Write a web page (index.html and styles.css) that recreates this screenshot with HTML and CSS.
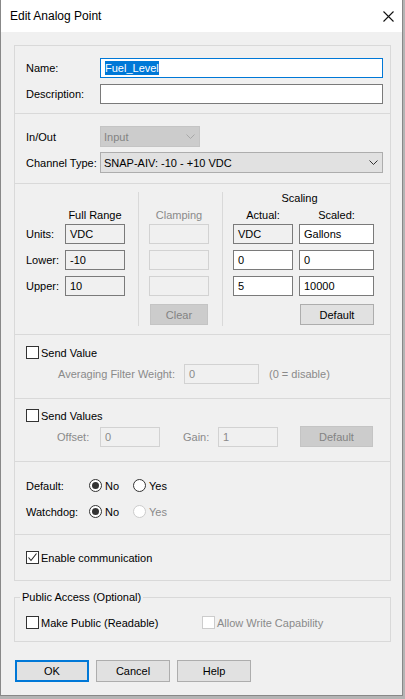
FILE: index.html
```html
<!DOCTYPE html>
<html>
<head>
<meta charset="utf-8">
<title>Edit Analog Point</title>
<link rel="stylesheet" href="styles.css">
</head>
<body>
<div class="window">
  <div class="titlebar">
    <span class="title">Edit Analog Point</span>
    <svg class="close" width="11" height="11" viewBox="0 0 11 11"><path d="M0.5 0.5L10.5 10.5M10.5 0.5L0.5 10.5" stroke="#111" stroke-width="1.1" fill="none"/></svg>
  </div>
  <div class="content">
    <div class="frame">
      <section class="sec sec-name">
        <div class="row"><span class="lbl">Name:</span><div class="field w-full focus"><span class="selected">Fuel_Level</span></div></div>
        <div class="row"><span class="lbl">Description:</span><div class="field w-full"></div></div>
      </section>

      <section class="sec sec-io">
        <div class="row"><span class="lbl">In/Out</span>
          <div class="combo dis w-io"><span class="txt">Input</span><span class="arrow"><svg width="9" height="5" viewBox="0 0 9 5"><path d="M0.5 0.5L4.5 4.5L8.5 0.5" stroke="#a8a8a8" fill="none"/></svg></span></div>
        </div>
        <div class="row"><span class="lbl">Channel Type:</span>
          <div class="combo w-full"><span class="txt">SNAP-AIV: -10 - +10 VDC</span><span class="arrow"><svg width="9" height="5" viewBox="0 0 9 5"><path d="M0.5 0.5L4.5 4.5L8.5 0.5" stroke="#333" fill="none"/></svg></span></div>
        </div>
      </section>

      <section class="sec sec-scale">
        <div class="scale-grid">
          <div class="hd hd-scaling">Scaling</div>
          <div class="hd c-fr r2">Full Range</div>
          <div class="hd c-cl r2 gray">Clamping</div>
          <div class="hd c-ac r2">Actual:</div>
          <div class="hd c-sc r2">Scaled:</div>
          <div class="vline v1"></div>
          <div class="vline v2"></div>

          <div class="slbl c-lb r3">Units:</div>
          <div class="field ro c-fr r3">VDC</div>
          <div class="field dis c-cl r3"></div>
          <div class="field ro c-ac r3">VDC</div>
          <div class="field c-sc r3">Gallons</div>

          <div class="slbl c-lb r4">Lower:</div>
          <div class="field ro c-fr r4">-10</div>
          <div class="field dis c-cl r4"></div>
          <div class="field c-ac r4">0</div>
          <div class="field c-sc r4">0</div>

          <div class="slbl c-lb r5">Upper:</div>
          <div class="field ro c-fr r5">10</div>
          <div class="field dis c-cl r5"></div>
          <div class="field c-ac r5">5</div>
          <div class="field c-sc r5">10000</div>

          <div class="btn dis btn-clear c-cl r6">Clear</div>
          <div class="btn btn-sdef c-sc r6">Default</div>
        </div>
      </section>

      <section class="sec sec-sv">
        <div class="chkrow"><span class="chk"></span><span>Send Value</span></div>
        <div class="row avg-row">
          <span class="avg-lbl gray">Averaging Filter Weight:</span>
          <div class="field dis w75">0</div>
          <span class="gray note">(0 = disable)</span>
        </div>
      </section>

      <section class="sec sec-svs">
        <div class="chkrow"><span class="chk"></span><span>Send Values</span></div>
        <div class="row off-row">
          <span class="off-lbl gray">Offset:</span>
          <div class="field dis w60">0</div>
          <span class="gain-lbl gray">Gain:</span>
          <div class="field dis w60">1</div>
          <div class="btn dis btn-vdef">Default</div>
        </div>
      </section>

      <section class="sec sec-radio">
        <div class="rrow"><span class="rlbl">Default:</span>
          <span class="opt"><span class="radio on"></span><span>No</span></span>
          <span class="opt"><span class="radio"></span><span>Yes</span></span>
        </div>
        <div class="rrow"><span class="rlbl">Watchdog:</span>
          <span class="opt"><span class="radio on"></span><span>No</span></span>
          <span class="opt gray"><span class="radio dis"></span><span>Yes</span></span>
        </div>
      </section>

      <section class="sec sec-comm">
        <div class="chkrow"><span class="chk"><svg width="11" height="11" viewBox="0 0 11 11"><path d="M1.5 5.5L4 8.5L9.5 1.5" stroke="#222" stroke-width="1.1" fill="none"/></svg></span><span>Enable communication</span></div>
      </section>
    </div>

    <fieldset class="group">
      <legend>Public Access (Optional)</legend>
      <div class="pubrow">
        <div class="chkrow pub1"><span class="chk"></span><span>Make Public (Readable)</span></div>
        <div class="chkrow gray"><span class="chk dis"></span><span>Allow Write Capability</span></div>
      </div>
    </fieldset>

    <div class="buttons">
      <div class="btn bbtn default">OK</div>
      <div class="btn bbtn">Cancel</div>
      <div class="btn bbtn">Help</div>
    </div>
  </div>
</div>
</body>
</html>
```

FILE: styles.css
```css
* { box-sizing: border-box; }
html, body { margin: 0; padding: 0; }
body {
  width: 405px;
  height: 699px;
  overflow: hidden;
  background: #b4b4b4;
  font-family: "Liberation Sans", Arial, sans-serif;
  font-size: 11px;
  color: #000;
}
.window {
  width: 403px;
  height: 696px;
  background: #f0f0f0;
  border: 1px solid #888;
  border-top: 0;
  display: flex;
  flex-direction: column;
}
.titlebar {
  flex: none;
  height: 32px;
  background: #fff;
  display: flex;
  align-items: center;
  justify-content: space-between;
  padding: 0 8px 0 9px;
}
.title { font-size: 12px; }
.close { display: block; }

.content { padding: 13px 11px 0 13px; }
.frame { border: 1px solid #d9d9d9; }
.sec + .sec { border-top: 1px solid #d9d9d9; }

.row { display: flex; align-items: center; }
.lbl { width: 74px; flex: none; }
.gray { color: #8a8a8a; }

.field {
  height: 20px;
  border: 1px solid #7a7a7a;
  background: #fff;
  padding-left: 4px;
  display: flex;
  align-items: center;
  white-space: nowrap;
  overflow: hidden;
}
.field.focus { border-color: #0078d7; }
.field.ro { background: #f0f0f0; }
.field.dis { background: #f0f0f0; border-color: #d2d2d2; color: #8a8a8a; }
.selected { background: #0078d7; color: #fff; line-height: 14px; }
.w-full { width: 283px; }
.w-io { width: 100px; }
.w75 { width: 75px; flex: none; }
.w60 { width: 60px; flex: none; }

.combo {
  height: 21px;
  border: 1px solid #adadad;
  background: #e1e1e1;
  display: flex;
  align-items: center;
  padding-left: 3px;
}
.combo .txt { flex: 1; }
.combo .arrow { width: 17px; display: flex; justify-content: center; }
.combo .arrow svg { display: block; }
.combo.dis { background: #cccccc; border-color: #c4c4c4; color: #838383; }

.sec-name { padding: 12px 0 9px 11px; display: flex; flex-direction: column; gap: 6px; }
.sec-io { padding: 12px 0 10px 11px; display: flex; flex-direction: column; gap: 5px; }

.sec-scale { padding: 6px 0 9px 11px; }
.scale-grid {
  display: grid;
  grid-template-columns: 39px 60px 13px 1px 10px 60px 13px 1px 10px 60px 6px 75px;
  grid-template-rows: 17px 17px 26px 26px 28px 21px;
}
.hd { text-align: center; line-height: 17px; }
.hd-scaling { grid-column: 10 / 13; grid-row: 1; padding-right: 8px; }
.c-lb { grid-column: 1; }
.c-fr { grid-column: 2; }
.c-cl { grid-column: 6; }
.c-ac { grid-column: 10; }
.c-sc { grid-column: 12; }
.r2 { grid-row: 2; }
.r3 { grid-row: 3; }
.r4 { grid-row: 4; }
.r5 { grid-row: 5; }
.r6 { grid-row: 6; }
.scale-grid .field { align-self: start; }
.slbl { line-height: 20px; align-self: start; }
.vline { grid-row: 1 / 7; background: #d9d9d9; margin-top: 2px; margin-bottom: -1px; }
.v1 { grid-column: 4; }
.v2 { grid-column: 8; }
.btn-clear { margin: 0 1px; }
.btn-sdef { margin-left: 1px; }

.btn {
  height: 21px;
  border: 1px solid #adadad;
  background: #e1e1e1;
  display: flex;
  align-items: center;
  justify-content: center;
}
.btn.dis { background: #cccccc; border-color: #c4c4c4; color: #838383; }

.chkrow { display: flex; align-items: center; height: 13px; gap: 2px; }
.chk {
  width: 13px;
  height: 13px;
  flex: none;
  border: 1px solid #333;
  background: #fff;
  display: flex;
  align-items: center;
  justify-content: center;
}
.chk svg { display: block; }
.chk.dis { border-color: #cccccc; }

.sec-sv { padding: 11px 0 14px 11px; }
.avg-row { margin-top: 5px; height: 20px; padding-left: 32px; }
.avg-lbl { width: 126px; flex: none; }
.note { margin-left: 10px; }

.sec-svs { padding: 10px 0 14px 11px; }
.off-row { margin-top: 4px; height: 21px; padding-left: 31px; }
.off-lbl { width: 43px; flex: none; }
.gain-lbl { width: 35px; flex: none; margin-left: 23px; }
.btn-vdef { width: 73px; margin-left: 22px; }

.sec-radio { padding: 15px 0 14px 11px; display: flex; flex-direction: column; gap: 9px; }
.rrow { display: flex; align-items: center; height: 17px; }
.rlbl { width: 63px; flex: none; }
.opt { width: 44px; display: flex; align-items: center; gap: 3px; }
.radio {
  width: 13px;
  height: 13px;
  flex: none;
  border: 1px solid #333;
  border-radius: 50%;
  background: #fff;
  display: flex;
  align-items: center;
  justify-content: center;
}
.radio.on::after {
  content: "";
  width: 7px;
  height: 7px;
  border-radius: 50%;
  background: #333;
}
.radio.dis { border-color: #cccccc; }

.sec-comm { padding: 16px 0 16px 11px; }

.group {
  margin: 10px 0 0 0;
  padding: 12px 0 12px 11px;
  border: 1px solid #d9d9d9;
  min-inline-size: 0;
}
.group legend {
  padding: 0 2px;
  margin-left: -6px;
  line-height: 13px;
}
.pubrow { display: flex; align-items: center; }
.pub1 { width: 176px; flex: none; }

.buttons { display: flex; gap: 7px; margin: 18px 0 0 1px; }
.bbtn { width: 74px; height: 22px; }
.bbtn.default { border: 2px solid #0078d7; }
```
